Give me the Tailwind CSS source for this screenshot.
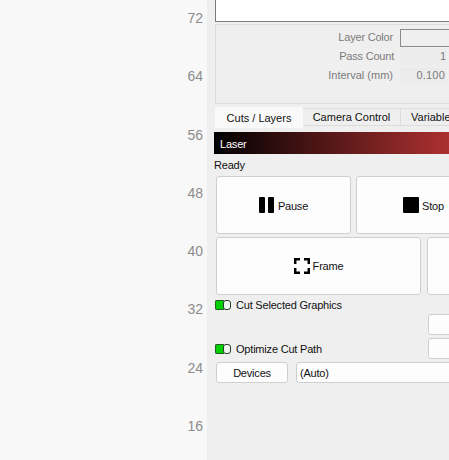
<!DOCTYPE html>
<html lang="en">
<head>
    <meta charset="UTF-8">
    <title>Laser</title>
    <script src="https://cdn.jsdelivr.net/npm/@tailwindcss/browser@4"></script>
</head>
<body class="w-[449px] h-[460px] overflow-hidden bg-[#f8f8f8] font-['Liberation_Sans',sans-serif]">
    <div class="flex h-[460px]">
        <!-- ruler -->
        <div class="w-[207px] shrink-0 pr-[4px] text-right text-[14px] text-[#8c8c8c]">
            <div class="h-[58.3px] leading-[36px]">72</div>
            <div class="h-[58.3px] leading-[36px]">64</div>
            <div class="h-[58.3px] leading-[36px]">56</div>
            <div class="h-[58.3px] leading-[36px]">48</div>
            <div class="h-[58.3px] leading-[36px]">40</div>
            <div class="h-[58.3px] leading-[36px]">32</div>
            <div class="h-[58.3px] leading-[36px]">24</div>
            <div class="h-[58.3px] leading-[36px]">16</div>
        </div>

        <!-- panel -->
        <div class="w-[242px] shrink-0 overflow-hidden bg-[#efefef] pl-[7px] text-[11px] tracking-[-0.2px] text-[#111]">
            <div class="w-[300px]">
                <div class="ml-[1px] h-[22px] border border-t-0 border-[#7a7a7a] bg-white"></div>

                <!-- layer settings -->
                <div class="mt-[2px] ml-[1px] h-[80px] border border-[#dcdcdc] pt-[3px] text-[#7b7b7b]">
                    <div class="flex h-[19px] items-center">
                        <div class="w-[177px] text-right">Layer Color</div>
                        <div class="ml-[7px] h-[18px] w-[100px] border border-[#8a8a8a]"></div>
                    </div>
                    <div class="flex h-[19px] items-center">
                        <div class="w-[178px] text-right">Pass Count</div>
                        <div class="ml-[6px] h-[17px] w-[47px] bg-[#ececec] pr-[1px] text-right leading-[17px]">1</div>
                    </div>
                    <div class="flex h-[19px] items-center">
                        <div class="w-[177px] text-right tracking-normal">Interval (mm)</div>
                        <div class="ml-[7px] h-[17px] w-[46px] bg-[#ececec] pr-[1px] text-right leading-[17px] tracking-[0.2px]">0.100</div>
                    </div>
                </div>

                <!-- tabs -->
                <div class="mt-[3px] ml-[1px] flex h-[21px] items-stretch tracking-normal">
                    <div class="flex w-[88px] items-center justify-center bg-[#f9f9f9] pt-[1px]">Cuts / Layers</div>
                    <div class="mt-[1px] mb-[2px] flex w-[98px] items-center justify-center border border-l-0 border-[#dcdcdc]">Camera Control</div>
                    <div class="mt-[1px] mb-[2px] border border-l-0 border-[#dcdcdc] pl-[10px] pr-[20px] leading-[16px]">Variable</div>
                </div>

                <!-- header bar -->
                <div class="mt-[4px] flex h-[22px] w-[235px] items-center bg-[linear-gradient(to_right,#000,#ad3030)] pl-[6px] pt-[2px] text-white">Laser</div>

                <div class="mt-[3px] h-[17px] leading-[17px]">Ready</div>

                <!-- action buttons -->
                <div class="mt-[2px] ml-[2px] flex gap-[5px]">
                    <div class="flex h-[58px] w-[135px] items-center justify-center gap-[4px] rounded-[3px] border border-[#cfcfcf] bg-[#fdfdfd]">
                        <svg width="15" height="16" viewBox="0 0 15 16" fill="#000"><rect x="0" y="0" width="6" height="16" rx="1"/><rect x="9" y="0" width="6" height="16" rx="1"/></svg>
                        <span class="pt-[2px]">Pause</span>
                    </div>
                    <div class="flex h-[58px] w-[135px] items-center justify-center gap-[3px] rounded-[3px] border border-[#cfcfcf] bg-[#fdfdfd]">
                        <svg width="16" height="16" viewBox="0 0 16 16" fill="#000"><rect width="16" height="16" rx="1"/></svg>
                        <span class="pt-[2px]">Stop</span>
                    </div>
                </div>
                <div class="mt-[3px] ml-[2px] flex gap-[6px]">
                    <div class="flex h-[58px] w-[205px] items-center justify-center gap-[3px] rounded-[3px] border border-[#cfcfcf] bg-[#fdfdfd]">
                        <svg width="16" height="16" viewBox="0 0 16 16" fill="none" stroke="#000" stroke-width="2.5"><path d="M1.2 6V1.2H6M10 1.2h4.8V6M14.8 10v4.8H10M6 14.8H1.2V10"/></svg>
                        <span class="pt-[1px]">Frame</span>
                    </div>
                    <div class="h-[58px] w-[70px] rounded-[3px] border border-[#cfcfcf] bg-[#fdfdfd]"></div>
                </div>

                <!-- options -->
                <div class="mt-[1px] flex h-[18px] items-center gap-[5px] pl-[1px]">
                    <div class="flex h-[10px] w-[16px]">
                        <div class="w-[9px] rounded-l-[2px] border border-r-0 border-[#1f5f1f] bg-[#00d000]"></div>
                        <div class="w-[8px] -ml-[1px] rounded-[3px] border border-[#2a3a2a] bg-[#eef4ee]"></div>
                    </div>
                    <span class="pt-[1px]">Cut Selected Graphics</span>
                </div>
                <div class="ml-[214px] h-[21px] w-[60px] rounded-[3px] border border-[#cfcfcf] bg-[#fdfdfd]"></div>
                <div class="mt-[3px] flex h-[21px] items-center">
                    <div class="flex w-[214px] items-center gap-[5px] pl-[1px]">
                        <div class="flex h-[10px] w-[16px]">
                            <div class="w-[9px] rounded-l-[2px] border border-r-0 border-[#1f5f1f] bg-[#00d000]"></div>
                            <div class="w-[8px] -ml-[1px] rounded-[3px] border border-[#2a3a2a] bg-[#eef4ee]"></div>
                        </div>
                        <span class="pt-[2px]">Optimize Cut Path</span>
                    </div>
                    <div class="h-[21px] w-[60px] rounded-[3px] border border-[#cfcfcf] bg-[#fdfdfd]"></div>
                </div>
                <div class="mt-[3px] ml-[2px] flex gap-[8px]">
                    <div class="flex h-[21px] w-[72px] items-center justify-center rounded-[3px] border border-[#cfcfcf] bg-[#fdfdfd] pt-[2px]">Devices</div>
                    <div class="flex h-[21px] w-[200px] items-center rounded-[3px] border border-[#cfcfcf] bg-[#fdfdfd] pl-[3px] pt-[2px]">(Auto)</div>
                </div>
            </div>
        </div>
    </div>
</body>
</html>
